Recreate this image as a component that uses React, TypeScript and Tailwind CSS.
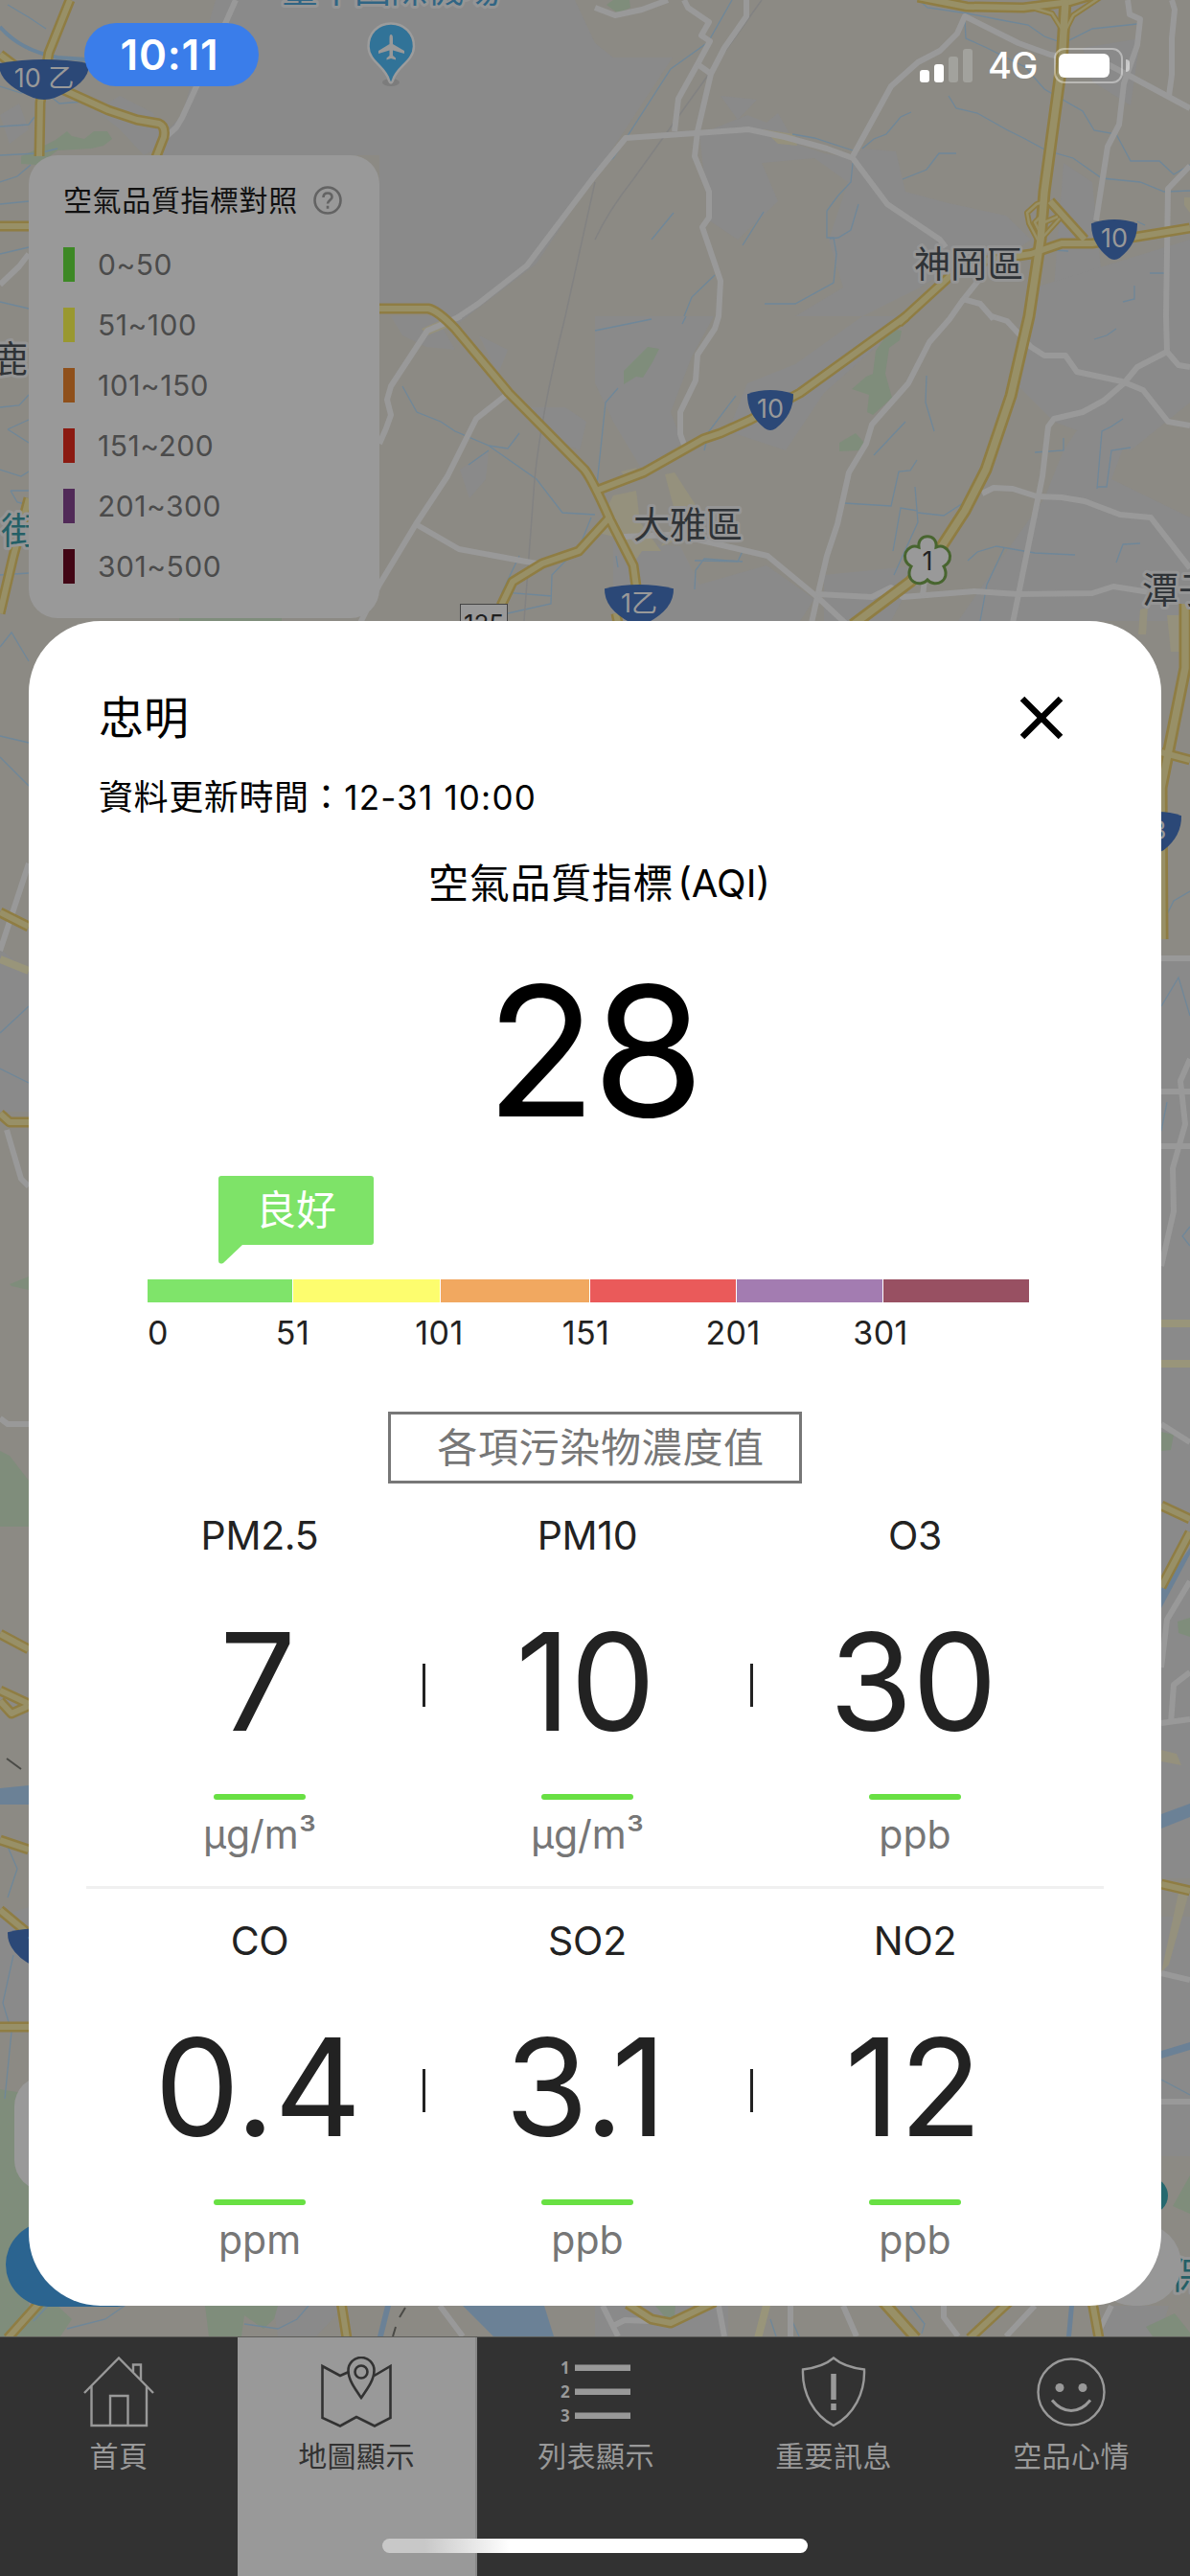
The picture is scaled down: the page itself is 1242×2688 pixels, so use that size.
import React from "react";

const legend = [
  { label: "0~50", color: "bg-[#3d8825]" },
  { label: "51~100", color: "bg-[#999830]" },
  { label: "101~150", color: "bg-[#8f501b]" },
  { label: "151~200", color: "bg-[#8b1a11]" },
  { label: "201~300", color: "bg-[#512a58]" },
  { label: "301~500", color: "bg-[#420615]" },
];

const scale = [
  { color: "bg-[#7fe46a]", width: "w-[151px]" },
  { color: "bg-[#fdfd6e]", width: "w-[153px]" },
  { color: "bg-[#f1a860]", width: "w-[155px]" },
  { color: "bg-[#ea5a5a]", width: "w-[152px]" },
  { color: "bg-[#a37cb1]", width: "w-[152px]" },
  { color: "bg-[#985062]", width: "w-[152px]" },
];

type Pollutant = { name: string; value: string; unit: string };

const pollutants: Pollutant[][] = [
  [
    { name: "PM2.5", value: "7", unit: "μg/m³" },
    { name: "PM10", value: "10", unit: "μg/m³" },
    { name: "O3", value: "30", unit: "ppb" },
  ],
  [
    { name: "CO", value: "0.4", unit: "ppm" },
    { name: "SO2", value: "3.1", unit: "ppb" },
    { name: "NO2", value: "12", unit: "ppb" },
  ],
];

const greens = [
  "M22 163 42 154 58 146 70 137 75 142 88 145 98 137 112 137 117 145 108 152 95 155 60 157 40 172 22 171Z",
  "M633 5 640 0 657 0 658 8 645 14Z",
  "M930 343 941 345 939 355 928 363 924 390 931 415 911 433 905 430 907 412 889 406 904 393 911 390 914 366Z",
  "M876 462 893 452 903 463 897 470 876 471Z",
  "M676 362 688 364 681 378 671 394 664 393 651 401 651 387Z",
  "M187 645H294V655H187Z",
  "M10 1340 30 1332V1346L12 1342Z",
  "M0 1514 10 1519 30 1545V1593H0Z",
  "M0 2180 30 2185V2406H290L286 2420 275 2430 255 2416 252 2438H218L214 2406H60L75 2420 63 2438H0Z",
  "M1212 1494 1225 1497 1222 1513 1212 1514Z M1229 1692 1242 1688V1708L1230 1704Z",
  "M1196 2428 1226 2414 1242 2434V2438H1203Z M684 2406H705L703 2428Z",
  "M1242 2270 1224 2302 1242 2310Z",
];

const urban = [
  "M225 0H240L290 0 600 0 621 45 640 60 702 60 621 183 560 275 475 340 455 322 396 322V162H170L176 135 190 120Z",
  "M100 115 125 100 160 118 172 150 150 162 125 135Z M0 120 20 108 30 135 10 150Z",
  "M730 140 780 120 800 128 812 118 830 150 860 160 890 165 900 155 935 158 945 200 990 212 1050 225 1076 250 1050 268 1000 275 960 300 900 330 830 330 880 300 865 250 885 190 850 165 795 170 812 210 770 250 740 230Z",
  "M752 100 790 104 770 125Z M1110 170 1140 190 1150 290 1100 300Z M1130 50 1190 40 1180 110 1140 85Z",
  "M621 330H745L722 372 700 430 712 462 670 490 640 440 621 400Z M780 400 830 380 900 330H950L860 410 820 470 760 450Z",
  "M1080 300 1242 250V420L1180 470 1100 440 1060 400Z M1110 470 1130 440 1175 460 1160 500 1242 540V648H1000L1040 590 1090 520Z",
  "M640 565 710 570 730 610 800 590 850 625 835 648H640Z M860 600 960 590 930 648H860Z",
  "M408 330 455 330 475 365 445 362 420 350Z M500 350 530 365 520 390Z M545 425 590 425 612 440 605 470 570 455Z M480 490 510 470 507 500 490 520Z",
  "M0 990 30 1015V1160H0Z M0 2000 30 1990V2110H0Z M1212 1000H1242V1960H1212Z M1212 2000H1242V2250H1212Z",
  "M285 2406H360L330 2438H290Z M621 2406H760V2438H621Z M1160 2406H1220L1210 2438H1150Z",
];

const paleYellow = [
  "M621 555 640 517 664 512 668 545 690 575H670L660 590 640 560Z",
  "M694 495 704 493 728 530 716 560 690 570 706 540Z M648 492 665 488 655 500Z",
  "M796 135 830 140 832 152 812 150Z M1236 206H1242V222L1236 214Z M440 343 470 330 466 342 446 350Z",
  "M1190 636 1198 634 1196 662H1188Z M1212 1826 1228 1830 1233 1842 1212 1838Z M1230 1975 1242 1971 1220 2050 1212 2058Z",
  "M1218 642H1238V680H1222Z",
];

const streams = [
  "M0 28 30 52 60 60 92 64M0 132 30 130 36 122M8 5 30 18 48 30M0 90 22 97 42 92 62 108 88 106M0 162 40 160 60 155M0 190 18 184 32 172M0 213 30 210M0 265 30 258M0 315 30 322",
  "M0 425 20 423 30 412M8 448 30 438M8 448 30 462M0 490 22 497 30 492M11 512H30M11 512 18 524 30 527M0 600 30 598",
  "M764 0 739 44 700 72 640 165 621 178M621 345 680 333M716 330 712 338",
  "M959 0 968 8 1010 14 1040 20 1073 26 1090 38 1110 45 1140 30 1187 25M1007 20 1008 40 1030 50 1070 70 1090 93 1130 116 1142 136 1165 140 1180 168 1210 168 1225 182 1242 172",
  "M990 100 998 113 1020 118 1050 135 1070 145 1092 157 1120 165 1150 186 1190 190 1215 200 1242 199M951 117 940 122 925 140 912 145 900 155",
  "M827 140 850 144 890 157M890 170 888 190 874 205 863 220V248H870L873 265 870 295 830 317H798M942 187 967 177 980 160H998",
  "M746 287 722 310 714 330M703 222 680 250M797 221 775 256M896 213 888 240 875 248 866 249",
  "M420 403 435 430 460 440 475 450 510 465 560 500 587 535 621 537M510 465 530 468 542 452M489 485 510 470",
  "M617 540 605 570 576 600 575 630 530 640M542 580 524 618 576 622M645 405 632 420 622 515M643 580 645 592",
  "M967 392 966 420 975 450M945 440 912 475M955 508 958 545 933 600M958 533 940 530 932 575M958 535 985 538 1005 525M881 525 930 528 938 492 950 491 957 480",
  "M768 413 740 450 735 470M725 585 730 585 770 586 775 575M725 615 726 595 735 583 775 586M1010 585 1020 576 1040 570 1080 577 1122 579",
  "M1145 510 1150 450 1160 445 1172 437M1145 508H1155L1160 470 1180 467M1110 457V470L1080 472M1165 587 1172 568 1190 567M1023 648 1030 610 1048 572",
  "M1086 260 1115 262M1200 285H1216M1184 298V312L1172 315M1142 354 1155 350 1165 343M1195 235 1187 231",
  "M0 675 12 660 30 690M0 768 30 775M0 790 30 820M0 1078 30 1050M0 1115 30 1130M8 1980 18 1950 5 1920M5 2190 12 2120 3 2090 14 2040",
  "M1200 990 1225 940 1242 930M1212 1050 1230 1020 1242 1060M1242 1300 1234 1290 1242 1280M1212 1180 1218 1150M1212 2170 1242 2186",
  "M35 2422 50 2406M70 2430 110 2420 130 2406M255 2425 290 2430 310 2420 322 2406M804 2420 810 2438M826 2420 834 2438M950 2406 965 2425 962 2435",
];

const whiteRoads = [
  "M246 0 234 27 190 123 184 133 172 144",
  "M30 265 20 278 0 297",
  "M714 0 718 8 740 23 732 37 741 43 728 67 708 103 704 137",
  "M728 67 742 77",
  "M621 8 642 16 670 10 697 0",
  "M779 0V17L756 50 742 77 728 137 725 163 740 200V227L733 237 752 293 750 330 746 343 728 370 726 397 710 430V453L715 467",
  "M475 333 499 317 550 277 621 183 653 144 740 138 781 135 819 143 863 155 890 165 926 213 981 250 987 258",
  "M890 163 930 90 958 65 981 53 999 35 1007 17 1063 45 1096 57 1156 67 1175 77 1242 113",
  "M1177 0 1179 15 1190 20 1187 47 1173 87 1168 130 1156 153 1144 230",
  "M1223 0 1226 10 1223 40V78L1220 100",
  "M1242 173 1219 197 1217 330 1218 367 1187 383 1173 400 1152 418 1130 430 1100 437 1094 445 1088 497 1057 650",
  "M1218 367 1230 381 1242 383",
  "M1035 330 1051 335 1076 362 1090 371H1112L1124 388 1171 398 1193 407 1219 440 1242 444",
  "M1021 293 1005 313 991 333 970 357 948 400 910 443 904 463 886 493 874 547 863 580 853 623 847 650",
  "M1005 312 1023 317 1037 333",
  "M1025 515 1037 509 1057 510 1082 518 1108 519 1132 523 1169 537 1201 540 1242 593",
  "M651 560 700 558 728 563 801 580 853 623 882 650",
  "M853 620 910 623 930 613 942 623 1017 617 1063 620 1140 619 1162 612 1200 618",
  "M965 605 963 622",
  "M481 330 446 345 408 403 404 417 408 433 403 447 396 463",
  "M531 410 497 437 467 497 434 547 396 610 376 650M434 547 479 573 560 588",
  "M0 992 30 901M7 1179 22 1230 30 1238M0 1480 8 1486H30",
  "M1212 1000H1242M1212 1139H1242M1212 1196H1242M1242 1105 1232 1128 1237 1173 1224 1219 1225 1264 1212 1321",
  "M1212 1486 1242 1505M1242 1650 1218 1690 1212 1740M1212 1798 1242 1794M1222 1798 1225 1758 1242 1745M1212 2059 1242 2066M1212 2193H1242",
  "M459 2406 483 2438M629 2406 645 2438M642 2426 652 2421 680 2422M750 2406 756 2438M825 2406V2438M880 2406 894 2438M1160 2406 1147 2432M985 2406V2418L1000 2438M1080 2406 1050 2438",
];

const yellowRoads = [
  "M73 0 51 55 42 107 41 163",
  "M0 57 24 75 69 95 113 115 143 125 166 129Q173 132 171 143L162 166",
  "M0 236H32",
  "M396 322H447Q457 324 475 343L531 410 610 490Q618 500 637 543L661 590 664 612",
  "M946 330 835 410 783 438 752 452 734 458 672 493 622 512",
  "M636 540 604 575 566 588 535 607 523 632",
  "M643 640 645 650",
  "M938 337 997 283 1029 272 1076 265 1108 254H1140L1187 247 1242 238",
  "M30 520 14 580 0 640",
  "M958 -3 1009 7 1068 8 1116 2 1150 -8",
  "M1096 210 1132 250",
  "M0 952 30 967M0 1162 10 1171H30M0 1705 30 1721M0 1764 30 1778M0 1775 12 1788 30 1780M0 1920 30 1930M0 1993 30 2018M0 2115H30",
  "M1212 785 1242 793M1212 1571 1242 1585M1212 1656 1242 1599M1212 1966 1242 1973",
  "M42 2402 8 2440M356 2402 362 2440M655 2404 680 2420 700 2424 746 2402M1053 2402 1012 2440M1140 2402 1147 2440",
];

const ramps = [
  "M1074 7 1098 14 1108 30M1108 40 1120 16 1150 -4",
  "M1088 211 1082 213 1072 222 1074 233 1086 256M1088 224 1080 232 1086 244M1090 232 1104 226M1088 248 1106 228",
];

const highways = [
  "M1112 0 1108 67 1090 200 1086 250 1074 330 1055 413 1029 490 1007 533 981 573 950 607 890 652",
  "M1237 630V697L1212 822 1213 980",
  "M922 2402 956 2440",
];

type RoadShieldProps = {
  x: number;
  y: number;
  w: number;
  h: number;
  children: React.ReactNode;
};

function RoadShield({ x, y, w, h, children }: RoadShieldProps) {
  return (
    <g transform={`translate(${x} ${y})`}>
      <path
        d={`M0 ${h * 0.1}Q${w / 2} ${-h * 0.1} ${w} ${h * 0.1}Q${w * 1.01} ${h * 0.6} ${w * 0.62} ${h * 0.95}Q${w / 2} ${h * 1.05} ${w * 0.38} ${h * 0.95}Q${-w * 0.01} ${h * 0.6} 0 ${h * 0.1}Z`}
        fill="#2b4877"
      />
      <text x={w / 2} y={h * 0.68} textAnchor="middle" fontSize="27" fill="#999">
        {children}
      </text>
    </g>
  );
}

function MapBackground() {
  return (
    <svg
      className="absolute inset-0 font-['Inter','Noto_Sans_CJK_TC',sans-serif]"
      width="1242"
      height="2688"
      viewBox="0 0 1242 2688"
      fill="none"
    >
      <rect width="1242" height="2688" fill="#8c8a84" />
      {urban.map((d) => (
        <path key={d} d={d} fill="#8a8a8a" />
      ))}
      {greens.map((d) => (
        <path key={d} d={d} fill="#7f8d7b" />
      ))}
      {paleYellow.map((d) => (
        <path key={d} d={d} fill="#95917d" />
      ))}

      {/* water */}
      <path
        d="M0 1866 30 1863V1883H0ZM483 2406H568L578 2438H515ZM402 2406H408L400 2438H394ZM1116 2406H1121L1118 2438H1113ZM1212 1658 1242 1615V1622L1212 1678ZM1212 1893 1242 1882V1896L1212 1908ZM1212 2140 1242 2131V2139L1212 2148Z"
        fill="#6b8196"
      />
      {streams.map((d) => (
        <path key={d} d={d} stroke="#6f8799" strokeWidth="1.3" />
      ))}
      <path d="M0 28Q20 52 60 60L90 62" stroke="#6b8499" strokeWidth="4" />

      {/* railway */}
      <path
        d="M795 0 740 77 661 187Q635 220 621 250M590 330Q565 430 558 500L547 648M621 190 590 330"
        stroke="#828282"
        strokeWidth="1.5"
      />
      <path d="M7 1835 22 1846M423 2408 417 2418M413 2428 410 2438" stroke="#4a4a46" strokeWidth="2" />

      <g stroke="#999" strokeWidth="6" strokeLinejoin="round">
        {whiteRoads.map((d) => (
          <path key={d} d={d} />
        ))}
      </g>
      <path
        d="M0 1001 30 1013M1212 1381H1242M1212 1423H1242M801 2402 791 2440"
        stroke="#99957a"
        strokeWidth="8"
      />
      <g stroke="#8f7d43" strokeWidth="11" strokeLinejoin="round">
        {yellowRoads.map((d) => (
          <path key={d} d={d} />
        ))}
      </g>
      <g stroke="#8f7d43" strokeWidth="13" strokeLinejoin="round">
        {highways.map((d) => (
          <path key={d} d={d} />
        ))}
      </g>
      <g stroke="#8f7d43" strokeWidth="6" strokeLinejoin="round">
        {ramps.map((d) => (
          <path key={d} d={d} />
        ))}
      </g>
      <g stroke="#989067" strokeWidth="2.5" strokeLinejoin="round">
        {ramps.map((d) => (
          <path key={d} d={d} />
        ))}
      </g>
      <g stroke="#989067" strokeWidth="6" strokeLinejoin="round">
        {yellowRoads.map((d) => (
          <path key={d} d={d} />
        ))}
      </g>
      <g stroke="#989067" strokeWidth="7.5" strokeLinejoin="round">
        {highways.map((d) => (
          <path key={d} d={d} />
        ))}
      </g>

      <RoadShield x={-1} y={62} w={94} h={42}>10 乙</RoadShield>
      <RoadShield x={1139} y={229} w={48} h={42}>10</RoadShield>
      <RoadShield x={780} y={407} w={48} h={42}>10</RoadShield>
      <RoadShield x={631} y={610} w={72} h={42}>1乙</RoadShield>
      <RoadShield x={1185} y={847} w={48} h={42}>3</RoadShield>
      <RoadShield x={8} y={2012} w={72} h={42}>74</RoadShield>

      {/* freeway blossom */}
      <path
        d="M959 571C957 556 979 556 977 571C990 566 998 584 985 591C993 606 976 614 968 605C960 614 943 606 951 591C938 584 946 566 959 571Z"
        fill="#999"
        stroke="#48652f"
        strokeWidth="3"
      />
      <text x="968" y="595" textAnchor="middle" fontSize="27" fill="#222">1</text>

      <rect x="480.5" y="630.5" width="49" height="40" fill="#999" stroke="#444" />
      <text x="505" y="660" textAnchor="middle" fontSize="26" fill="#1f1f1f">125</text>

      <g fontSize="38" stroke="#959595" strokeWidth="6" strokeLinejoin="round" style={{ paintOrder: "stroke" }}>
        <g fill="#2f3337">
          <text x="954" y="289">神岡區</text>
          <text x="661" y="561">大雅區</text>
          <text x="1192" y="629">潭子</text>
          <text x="-9" y="388">鹿</text>
        </g>
        <g fill="#245f66">
          <text x="1" y="567">街</text>
          <text x="1221" y="2388">保</text>
        </g>
        <text x="408" y="2" textAnchor="middle" fill="#306584">臺中國際機場</text>
      </g>

      {/* airport pin */}
      <ellipse cx="408" cy="86" rx="9" ry="4" fill="#7c7c7c" />
      <path
        d="M408 24.5C394 24.5 384.5 35 384.5 48.5C384.5 64 403 70 406 84Q408 89 410 84C413 70 432 64 432 48.5C432 35 422 24.5 408 24.5Z"
        fill="#317398"
        stroke="#9c9c9c"
        strokeWidth="2.5"
      />
      <path
        d="M408 36Q410 36 410 40V46L422 53V56L410 52.5V58L413 60.5V62.5L408 61 403.5 62.5V60.5L406.5 58V52.5L395 56V53L406.5 46V40Q406.5 36 408 36Z"
        fill="#999"
      />

      {/* floating map buttons that peek out behind the card */}
      <rect x="15" y="2166" width="120" height="120" rx="32" fill="#999" />
      <rect x="6" y="2319" width="160" height="88" rx="44" fill="#2b6490" />
      <circle cx="1200" cy="2291" r="19" fill="#26696f" />
      <rect x="1140" y="2320" width="93" height="86" rx="43" fill="#979797" />
    </svg>
  );
}

function StatusBar() {
  return (
    <div className="flex h-[162px] shrink-0 items-start justify-between">
      <div className="mt-6 ml-[88px] flex h-[66px] w-[182px] items-center justify-center rounded-[33px] bg-[#3a7dea] pr-1 text-[44px] leading-none font-semibold tracking-[0.8px] text-white">
        10:11
      </div>
      <div className="mt-[48px] mr-[63px] flex h-10 items-center">
        <div className="flex h-[36px] items-end gap-[5px]">
          <div className="h-[13px] w-2.5 rounded-[3px] bg-white" />
          <div className="h-[19px] w-2.5 rounded-[3px] bg-white" />
          <div className="h-[27px] w-2.5 rounded-[3px] bg-[#a2a29d]" />
          <div className="h-[35px] w-2.5 rounded-[3px] bg-[#a2a29d]" />
        </div>
        <span className="ml-[16px] w-[54px] text-[38px] leading-[42px] font-medium tracking-[-1px] whitespace-nowrap text-white">4G</span>
        <div className="ml-[15px] flex h-[37px] w-[72px] items-center rounded-[11px] border-[2.5px] border-white/40 pl-[3px]">
          <div className="h-[25px] w-[53px] rounded-md bg-white" />
        </div>
        <div className="ml-[3px] h-[13px] w-1 rounded-r-full bg-white/50" />
      </div>
    </div>
  );
}

function Legend() {
  return (
    <div className="ml-[30px] h-[483px] w-[366px] shrink-0 rounded-[30px] bg-[#999] pt-[27px] pl-9">
      <div className="flex h-10 items-center text-[30px] leading-10 tracking-[0.6px] text-[#111]">
        空氣品質指標對照
        <svg className="ml-[15px]" width="32" height="32" viewBox="0 0 32 32" fill="none" stroke="#636363" strokeWidth="2.6">
          <circle cx="16" cy="16" r="13.5" />
          <path d="M11.5 13Q11.5 8.5 16 8.5T20.5 12.7C20.5 15.5 16 16 16 19.5M16 21.8V24.8" />
        </svg>
      </div>
      <div className="mt-[29px] flex flex-col gap-[27px]">
        {legend.map((item) => (
          <div key={item.label} className="flex h-9 items-center">
            <div className={`h-9 w-3 ${item.color}`} />
            <span className="ml-6 text-[30px] leading-9 tracking-[0.5px] text-[#4b4b4b]">{item.label}</span>
          </div>
        ))}
      </div>
    </div>
  );
}

function Reading({ name, value, unit }: Pollutant) {
  return (
    <div className="flex w-[342px] flex-col items-center">
      <div className="h-[50px] text-[41px] leading-[50px] tracking-[-0.3px] text-[#222]">{name}</div>
      <div className="mt-[58px] h-[140px] pr-1 text-[141px] leading-[140px] tracking-[-0.5px] text-[#222]">{value}</div>
      <div className="mt-[47px] h-1.5 w-24 rounded-full bg-[#68e043]" />
      <div className="mt-[11px] h-[50px] text-[41px] leading-[50px] text-[#767676]">{unit}</div>
    </div>
  );
}

function PollutantRow({ items }: { items: Pollutant[] }) {
  return (
    <div className="mt-[29px] flex h-[362px] pl-[70px]">
      {items.map((item, i) => (
        <React.Fragment key={item.name}>
          {i > 0 && <div className="-mx-[1.5px] mt-[159px] h-[45px] w-[3px] shrink-0 bg-[#222]" />}
          <Reading {...item} />
        </React.Fragment>
      ))}
    </div>
  );
}

function StationCard() {
  return (
    <div className="mx-[30px] mt-[3px] flex h-[1758px] shrink-0 flex-col rounded-[75px] bg-white pt-[71px] text-black">
      <div className="flex h-[60px] items-center justify-between pr-[101px] pl-[73px]">
        <h1 className="text-[47px] leading-[60px]">忠明</h1>
        <svg width="48" height="48" viewBox="0 0 48 48" stroke="#000" strokeWidth="6.5">
          <path d="M4 4 44 44M44 4 4 44" />
        </svg>
      </div>
      <p className="mt-[23px] h-[60px] pl-[73px] text-[36px] leading-[60px] whitespace-nowrap">
        <span className="tracking-[0.6px]">資料更新時間：</span>
        <span className="text-[35px] tracking-[1.2px]">12-31 10:00</span>
      </p>
      <h2 className="mt-[30px] flex h-[60px] justify-center pl-[9px] text-[42px] leading-[60px]">
        <span className="tracking-[0.7px]">空氣品質指標</span>
        <span className="ml-1 text-[40px]">(AQI)</span>
      </h2>
      <div className="mt-[45px] h-[200px] pr-1 text-center text-[189px] leading-[200px] tracking-[-4px]">28</div>

      <div className="mt-[30px] ml-[198px] h-[92px] w-[162px]">
        <div className="flex h-[72px] items-center justify-center rounded-[3px] bg-[#7ee368] text-[42px] leading-none text-white">
          良好
        </div>
        <svg width="25" height="24" viewBox="0 0 25 24" className="-mt-1" fill="#7ee368">
          <path d="M0 0H25V4L5 23Q0 25 0 20Z" />
        </svg>
      </div>
      <div className="mt-4 ml-[124px] flex h-6 gap-px">
        {scale.map((s) => (
          <div key={s.color} className={`h-6 ${s.width} ${s.color}`} />
        ))}
      </div>
      <div className="mt-3 ml-[124px] flex h-10 text-center text-[34px] leading-10 tracking-[0.4px] text-[#222]">
        <span className="w-[75px] text-left">0</span>
        <span className="w-[153px]">51</span>
        <span className="w-[153px]">101</span>
        <span className="w-[153px]">151</span>
        <span className="w-[154px]">201</span>
        <span className="w-[154px]">301</span>
      </div>

      <div className="mt-[62px] ml-[375px] flex h-[75px] w-[432px] items-center justify-center border-[3px] border-[#777] pl-3 text-[42px] leading-none tracking-[0.7px] whitespace-nowrap text-[#777]">
        各項污染物濃度值
      </div>

      <PollutantRow items={pollutants[0]} />
      <div className="mx-[60px] mt-[29px] h-[3px] bg-[#f0f0f0]" />
      <PollutantRow items={pollutants[1]} />
    </div>
  );
}

function HomeIcon() {
  return (
    <svg width="74" height="74" viewBox="0 0 74 74" fill="none" stroke="#999" strokeWidth="2.4">
      <path d="M1 38 37 1.5 73 38M8.5 31V72H66V31M28 72V41H46.5V72M52 16V8.5H60V24" />
    </svg>
  );
}

function MapIcon() {
  return (
    <svg width="74" height="74" viewBox="0 0 74 74" fill="none" stroke="#323232" strokeWidth="2.6">
      <path d="M29 16 20 20 1.5 10V64L20 72.5 37 63 56 72.5 72.5 64V10L55.5 20" />
      <path d="M42 43C35 33 28.5 24 28.5 14.5A13.5 13.5 0 0 1 55.5 14.5C55.5 24 49 33 42 43Z" />
      <circle cx="42" cy="16" r="6.5" />
    </svg>
  );
}

function ListIcon() {
  return (
    <svg width="74" height="74" viewBox="0 0 74 74" fill="#999" className="font-['Open_Sans',sans-serif]">
      <g fontSize="17" fontWeight="700">
        <text x="0" y="17.5">1</text>
        <text x="0" y="42.5">2</text>
        <text x="0" y="67.5">3</text>
      </g>
      <path d="M15 8.5H73V15H15ZM15 33.5H73V40H15ZM15 58.5H73V65H15Z" />
    </svg>
  );
}

function AlertIcon() {
  return (
    <svg width="74" height="74" viewBox="0 0 74 74" fill="none" stroke="#999" strokeWidth="2.4">
      <path d="M37 1.5Q48 11 69 13.5C70 38 58 61 37 72C16 61 4 38 5 13.5Q26 11 37 1.5Z" />
      <path d="M37 18V45M37 49V56" strokeWidth="5.5" />
    </svg>
  );
}

function SmileIcon() {
  return (
    <svg width="74" height="74" viewBox="0 0 74 74" fill="none" stroke="#999" strokeWidth="2.4">
      <circle cx="37" cy="37" r="34.5" />
      <circle cx="25" cy="32.5" r="4.5" fill="#999" stroke="none" />
      <circle cx="49" cy="32.5" r="4.5" fill="#999" stroke="none" />
      <path d="M17 45.5Q26 56.5 37 56.5T57 45.5" strokeWidth="3" />
    </svg>
  );
}

const tabs = [
  { label: "首頁", icon: <HomeIcon /> },
  { label: "地圖顯示", icon: <MapIcon />, active: true },
  { label: "列表顯示", icon: <ListIcon /> },
  { label: "重要訊息", icon: <AlertIcon /> },
  { label: "空品心情", icon: <SmileIcon /> },
];

function TabBar() {
  return (
    <div className="relative mt-8 flex h-[250px] shrink-0 border-t border-[#5c5c58] bg-[#323232]">
      {tabs.map((tab) => (
        <div
          key={tab.label}
          className={`flex flex-1 flex-col items-center pt-5 text-[30px] leading-10 tracking-[0.4px] ${
            tab.active ? "border-r-2 border-[#888] bg-[#999] text-[#323232]" : "text-[#999]"
          }`}
        >
          {tab.icon}
          <span className="mt-[10px]">{tab.label}</span>
        </div>
      ))}
      {/* home indicator */}
      <div className="absolute top-[210px] left-[399px] h-[15px] w-[444px] rounded-full bg-linear-to-r from-[#c8c8c8] from-10% to-white to-30%" />
    </div>
  );
}

export default function App() {
  return (
    <div className="relative flex h-[2688px] w-[1242px] flex-col overflow-hidden font-['Inter','Noto_Sans_CJK_TC',sans-serif]">
      <MapBackground />
      <div className="relative flex flex-col">
        <StatusBar />
        <Legend />
        <StationCard />
        <TabBar />
      </div>
    </div>
  );
}
